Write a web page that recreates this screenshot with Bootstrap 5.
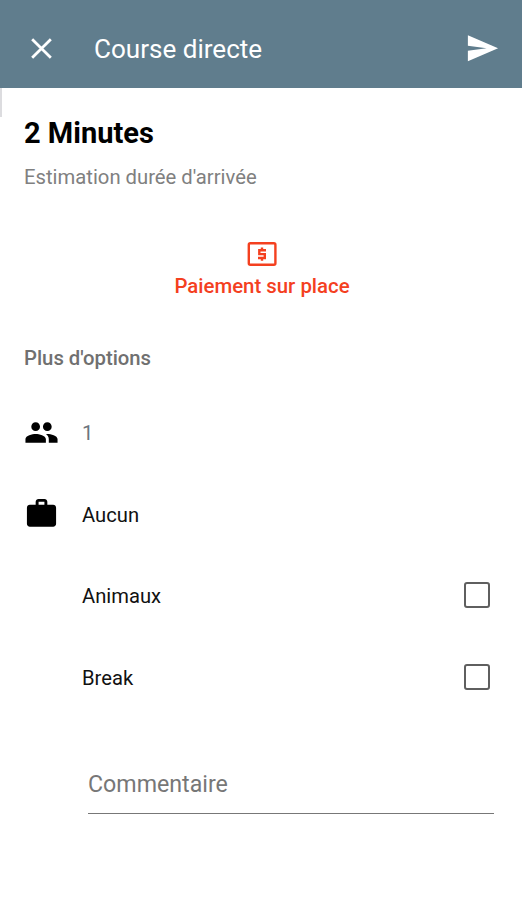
<!DOCTYPE html>
<html lang="fr">
<head>
<meta charset="utf-8">
<meta name="viewport" content="width=device-width, initial-scale=1">
<title>Course directe</title>
<link href="https://cdn.jsdelivr.net/npm/bootstrap@5.3.0/dist/css/bootstrap.min.css" rel="stylesheet">
<style>
body{font-family:Roboto,"Liberation Sans",sans-serif;background:#fff;color:#111;height:900px;overflow:hidden}
svg{display:block;flex:none}
.topbar{height:88px;background:#607d8d;padding:8px 23px 0 24px}
.topbar h1{font-size:26.05px;line-height:32px;margin-left:35px;padding-top:2px;font-weight:400}
.edge-handle{width:2px;height:29px;background:#dcdcdf;top:88px;left:0}
.eta{font-size:29px;line-height:34px;font-weight:700;color:#000;padding:28px 24px 0}
.eta-note{font-size:20.25px;line-height:24px;color:#808080;padding:15px 24px 0}
.pay{color:#f4401f;font-size:20.4px;line-height:24px;font-weight:500;padding:53px 0 0 2px}
.pay-label{margin-top:7px}
.more{font-size:20.3px;line-height:24px;font-weight:500;color:#707070;padding:48px 24px 0}
.options{padding-top:21.5px}
.option{height:81.5px;padding:0 32px 0 24px;font-size:20.2px;line-height:24px}
.option span,.option label{padding-top:2px}
.option-icon{width:58px}
.form-check-input.box{width:26px;height:26px;margin:0;border:2.5px solid #5f5f5f;border-radius:3px}
.form-control.comment{margin:54px 28px 0 88px;width:406px;height:42px;border:0;border-bottom:1.5px solid #777;border-radius:0;padding:0 0 16px;font-size:23.2px;line-height:26px;color:#333}
.comment::placeholder{color:#777}
</style>
</head>
<body>
<header class="topbar d-flex align-items-center text-white">
  <svg width="35" height="35" viewBox="0 0 24 24" fill="none" stroke="#fff" stroke-width="1.9"><path d="M5.6 5.6 18.4 18.4M18.4 5.6 5.6 18.4"/></svg>
  <h1 class="mb-0 me-auto">Course directe</h1>
  <svg width="34.5" height="34.5" viewBox="0 0 24 24" fill="#fff"><path d="M2.01 21 23 12 2.01 3 2 10.3l13 1.7-13 1.7z"/></svg>
</header>
<div class="edge-handle position-absolute"></div>
<main>
  <h2 class="eta mb-0">2 Minutes</h2>
  <p class="eta-note mb-0"><span>Estimation durée d'arrivée</span></p>
  <section class="pay d-flex flex-column align-items-center">
    <svg width="30" height="25" viewBox="0 0 30 25" fill="none" stroke="currentColor" stroke-width="2.4"><rect x="1.8" y="1.3" width="26.6" height="21.4" rx="1.5"/><path d="M19 8.2h-6.7v3.9h5.5v3.9H11M15 5.4v2.8M15 16v2.8" stroke-width="2.4"/></svg>
    <span class="pay-label">Paiement sur place</span>
  </section>
  <h3 class="more mb-0"><span>Plus d'options</span></h3>
  <section class="options">
    <div class="option d-flex align-items-center">
      <div class="option-icon"><svg width="35" height="35" viewBox="0 0 24 24"><path d="M16 11c1.66 0 2.99-1.34 2.99-3S17.66 5 16 5s-3 1.34-3 3 1.34 3 3 3zm-8 0c1.66 0 2.99-1.34 2.99-3S9.66 5 8 5 5 6.34 5 8s1.34 3 3 3zm0 2c-2.33 0-7 1.17-7 3.5V19h14v-2.5c0-2.33-4.67-3.5-7-3.5zm8 0c-.29 0-.62.02-.97.05 1.16.84 1.97 1.97 1.97 3.45V19h6v-2.5c0-2.33-4.67-3.5-7-3.5z"/></svg></div>
      <span class="text-secondary">1</span>
    </div>
    <div class="option d-flex align-items-center">
      <div class="option-icon"><svg width="35" height="35" viewBox="0 0 24 24"><path d="M20 6h-4V4c0-1.11-.89-2-2-2h-4c-1.11 0-2 .89-2 2v2H4c-1.11 0-1.99.89-1.99 2L2 19c0 1.11.89 2 2 2h16c1.11 0 2-.89 2-2V8c0-1.11-.89-2-2-2zm-6 0h-4V4h4v2z"/></svg></div>
      <span>Aucun</span>
    </div>
    <div class="option d-flex align-items-center">
      <div class="option-icon"></div>
      <label class="me-auto" for="pets">Animaux</label>
      <input class="form-check-input box" type="checkbox" id="pets">
    </div>
    <div class="option d-flex align-items-center">
      <div class="option-icon"></div>
      <label class="me-auto" for="estate">Break</label>
      <input class="form-check-input box" type="checkbox" id="estate">
    </div>
  </section>
  <input class="form-control comment" type="text" placeholder="Commentaire" aria-label="Commentaire">
</main>
<script src="https://cdn.jsdelivr.net/npm/bootstrap@5.3.0/dist/js/bootstrap.bundle.min.js"></script>
</body>
</html>
